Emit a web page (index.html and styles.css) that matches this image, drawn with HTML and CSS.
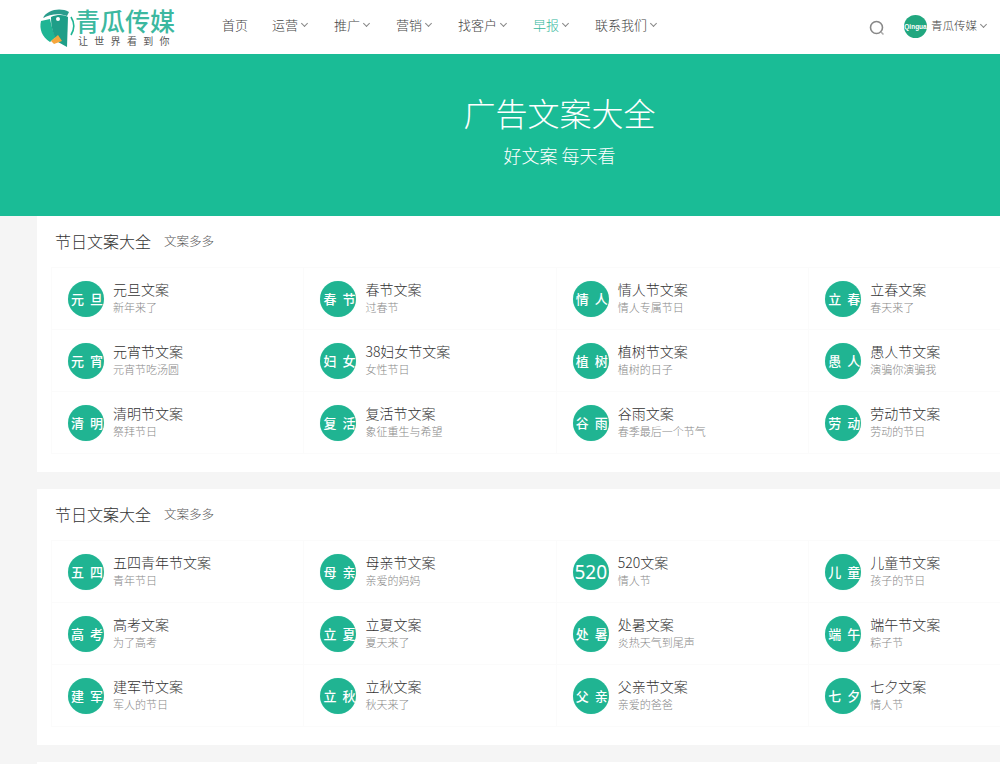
FILE: index.html
```html
<!DOCTYPE html>
<html lang="zh-CN">
<head>
<meta charset="utf-8">
<title>广告文案大全</title>
<link rel="stylesheet" href="styles.css">
</head>
<body>
<header class="topbar">
  <a class="logo">
    <svg class="logo-mark" viewBox="0 0 38 42" width="38" height="42">
      <path d="M5 11C9 3 22 0 31 5L29 9C22 6 12 7 5 11Z" fill="#2a9c8c"/>
      <path d="M3 14L12 12C14 20 15 26 18 30L12 35C4 30 1 22 3 14Z" fill="#1fb594"/>
      <path d="M13 10C20 7 27 8 30 10L29 40 20 35C15 28 13 20 13 10Z" fill="#1e9e88"/>
      <circle cx="20" cy="12" r="2" fill="#fff"/>
      <path d="M33 10A17 17 0 0 1 33 28" fill="none" stroke="#1fb594" stroke-width="1.6"/>
      <path d="M13 34L20 28 24 34 16 37Z" fill="#f5a63c"/>
    </svg>
    <span class="logo-text">
      <span class="logo-name">青瓜传媒</span>
      <span class="logo-tag">让世界看到你</span>
    </span>
  </a>
  <nav class="nav">
    <a class="nav-item">首页</a>
    <a class="nav-item">运营<i class="chev"></i></a>
    <a class="nav-item">推广<i class="chev"></i></a>
    <a class="nav-item">营销<i class="chev"></i></a>
    <a class="nav-item">找客户<i class="chev"></i></a>
    <a class="nav-item active">早报<i class="chev"></i></a>
    <a class="nav-item">联系我们<i class="chev"></i></a>
  </nav>
  <div class="tools">
    <svg class="search" viewBox="0 0 18 18" width="18" height="18"><circle cx="8.5" cy="8.5" r="6" fill="none" stroke="#888" stroke-width="1.6"/><path d="M13 13L15.5 15.5" stroke="#aaa" stroke-width="1.5"/></svg>
    <span class="avatar">Qingua</span>
    <span class="user">青瓜传媒<i class="chev"></i></span>
  </div>
</header>

<section class="hero">
  <h1>广告文案大全</h1>
  <p>好文案 每天看</p>
</section>

<main class="main">
  <section class="card">
    <div class="card-head"><h2>节日文案大全</h2><span>文案多多</span></div>
    <div class="grid">
      <a class="cell"><span class="badge">元旦</span><span class="info"><b>元旦文案</b><small>新年来了</small></span></a>
      <a class="cell"><span class="badge">春节</span><span class="info"><b>春节文案</b><small>过春节</small></span></a>
      <a class="cell"><span class="badge">情人</span><span class="info"><b>情人节文案</b><small>情人专属节日</small></span></a>
      <a class="cell"><span class="badge">立春</span><span class="info"><b>立春文案</b><small>春天来了</small></span></a>
      <a class="cell"><span class="badge">元宵</span><span class="info"><b>元宵节文案</b><small>元宵节吃汤圆</small></span></a>
      <a class="cell"><span class="badge">妇女</span><span class="info"><b>38妇女节文案</b><small>女性节日</small></span></a>
      <a class="cell"><span class="badge">植树</span><span class="info"><b>植树节文案</b><small>植树的日子</small></span></a>
      <a class="cell"><span class="badge">愚人</span><span class="info"><b>愚人节文案</b><small>演骗你演骗我</small></span></a>
      <a class="cell"><span class="badge">清明</span><span class="info"><b>清明节文案</b><small>祭拜节日</small></span></a>
      <a class="cell"><span class="badge">复活</span><span class="info"><b>复活节文案</b><small>象征重生与希望</small></span></a>
      <a class="cell"><span class="badge">谷雨</span><span class="info"><b>谷雨文案</b><small>春季最后一个节气</small></span></a>
      <a class="cell"><span class="badge">劳动</span><span class="info"><b>劳动节文案</b><small>劳动的节日</small></span></a>
    </div>
  </section>
  <section class="card">
    <div class="card-head"><h2>节日文案大全</h2><span>文案多多</span></div>
    <div class="grid">
      <a class="cell"><span class="badge">五四</span><span class="info"><b>五四青年节文案</b><small>青年节日</small></span></a>
      <a class="cell"><span class="badge">母亲</span><span class="info"><b>母亲节文案</b><small>亲爱的妈妈</small></span></a>
      <a class="cell"><span class="badge num">520</span><span class="info"><b>520文案</b><small>情人节</small></span></a>
      <a class="cell"><span class="badge">儿童</span><span class="info"><b>儿童节文案</b><small>孩子的节日</small></span></a>
      <a class="cell"><span class="badge">高考</span><span class="info"><b>高考文案</b><small>为了高考</small></span></a>
      <a class="cell"><span class="badge">立夏</span><span class="info"><b>立夏文案</b><small>夏天来了</small></span></a>
      <a class="cell"><span class="badge">处暑</span><span class="info"><b>处暑文案</b><small>炎热天气到尾声</small></span></a>
      <a class="cell"><span class="badge">端午</span><span class="info"><b>端午节文案</b><small>粽子节</small></span></a>
      <a class="cell"><span class="badge">建军</span><span class="info"><b>建军节文案</b><small>军人的节日</small></span></a>
      <a class="cell"><span class="badge">立秋</span><span class="info"><b>立秋文案</b><small>秋天来了</small></span></a>
      <a class="cell"><span class="badge">父亲</span><span class="info"><b>父亲节文案</b><small>亲爱的爸爸</small></span></a>
      <a class="cell"><span class="badge">七夕</span><span class="info"><b>七夕文案</b><small>情人节</small></span></a>
    </div>
  </section>
  <section class="card"></section>
</main>
</body>
</html>
```
FILE: styles.css
```css
* { box-sizing: border-box; }
html, body { margin: 0; height: 764px; overflow: hidden; }
body {
  background: #f5f5f5;
  font-family: "Noto Sans CJK SC", "Liberation Sans", sans-serif;
  color: #444;
}
.topbar {
  display: flex;
  align-items: center;
  height: 54px;
  padding-left: 38px;
  background: #fff;
}
.logo { display: flex; align-items: center; width: 184px; }
.logo-mark { flex: none; margin-top: 1px; }
.logo-text { display: flex; flex-direction: column; margin-left: -1px; margin-top: -1px; }
.logo-name { font-size: 25px; line-height: 28px; font-weight: 500; color: #3cb8a0; white-space: nowrap; }
.logo-tag { font-size: 10px; line-height: 12px; letter-spacing: 6.3px; color: #555; margin: 1px 0 0 3px; white-space: nowrap; }
.nav { display: flex; gap: 24px; margin-bottom: 5px; }
.nav-item { display: flex; align-items: center; font-size: 13px; line-height: 20px; font-weight: 300; color: #444; white-space: nowrap; }
.nav-item.active { color: #34b89c; }
.chev {
  display: inline-block;
  width: 5px;
  height: 5px;
  margin: -2px 3px 0 4px;
  border-right: 1px solid #888;
  border-bottom: 1px solid #888;
  transform: rotate(45deg);
}
.tools { display: flex; align-items: center; margin-left: auto; }
.search { margin-right: 18px; margin-top: 1px; }
.avatar {
  display: flex;
  align-items: center;
  justify-content: center;
  width: 23px;
  height: 23px;
  margin-right: 4px;
  margin-bottom: 2px;
  border-radius: 50%;
  background: #21a77f;
  color: #fff;
  font-size: 6.5px;
  font-weight: 700;
  font-family: "Liberation Sans", sans-serif;
}
.user { display: flex; align-items: center; font-size: 11.5px; font-weight: 300; color: #444; white-space: nowrap; margin-bottom: 4px; }
.user .chev { margin: -2px 14px 0 4px; }

.hero {
  height: 162px;
  background: #1abc96;
  color: #fff;
  text-align: center;
  padding: 35px 0 0 119px;
}
.hero h1 { margin: 0; font-size: 32px; line-height: 46px; font-weight: 300; }
.hero p { margin: 8px 0 0; font-size: 18px; line-height: 24px; font-weight: 300; }

.main { padding-left: 37px; display: flex; flex-direction: column; gap: 17px; }
.card { width: 1100px; height: 256px; flex: none; background: #fff; padding: 0 0 0 14px; }
.card-head { display: flex; align-items: baseline; gap: 13px; height: 51px; padding: 13px 0 0 4px; }
.card-head h2 { margin: 0; font-size: 16px; line-height: 24px; font-weight: 300; color: #333; }
.card-head span { font-size: 12.5px; font-weight: 300; color: #555; position: relative; top: -2px; }
.grid {
  display: grid;
  grid-template-columns: repeat(4, 252.4px);
  grid-auto-rows: 62px;
  border-top: 1px solid #fbfbfb;
  border-left: 1px solid #fbfbfb;
  width: 1011px;
}
.cell {
  display: flex;
  align-items: center;
  padding-left: 16px;
  border-right: 1px solid #fbfbfb;
  border-bottom: 1px solid #fbfbfb;
}
.badge {
  flex: none;
  display: flex;
  align-items: center;
  width: 36px;
  height: 36px;
  border-radius: 50%;
  background: #20b492;
  box-shadow: 0 0 1px #bff3e6;
  color: #fff;
  font-size: 13px;
  font-weight: 500;
  letter-spacing: 6px;
  padding-left: 3px;
  white-space: nowrap;
}
.badge.num { justify-content: center; padding-left: 0; font-family: "Noto Sans", sans-serif; font-size: 19px; font-weight: 400; letter-spacing: 0; }
.info { display: flex; flex-direction: column; margin: -2px 0 0 9px; }
.info b { font-size: 14px; line-height: 18px; font-weight: 300; color: #333; white-space: nowrap; }
.info small { font-size: 11px; line-height: 18px; font-weight: 300; color: #888; white-space: nowrap; }
```
